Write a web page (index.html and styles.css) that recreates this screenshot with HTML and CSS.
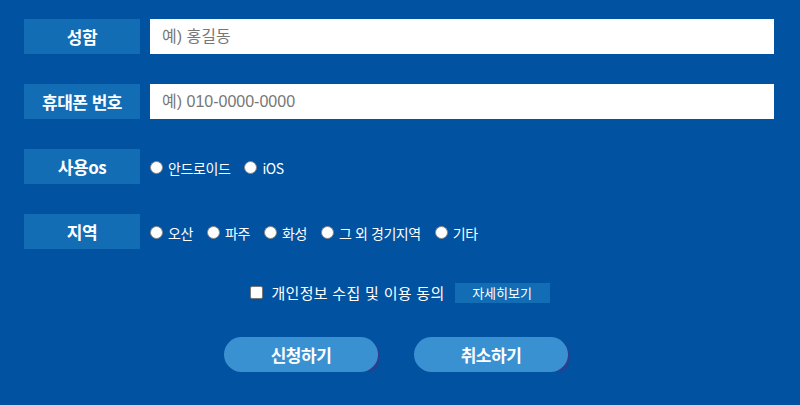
FILE: index.html
```html
<!DOCTYPE html>
<html lang="ko">
<head>
    <meta charset="UTF-8">
    <meta name="viewport" content="width=device-width, initial-scale=1.0">
    <title>신청하기</title>
    <link rel="stylesheet" href="styles.css">
</head>

<body>
    <form class="apply-form" method="post">
        <div class="form-row">
            <label class="row-title" for="name">성함</label>
            <input type="text" id="name" name="name" placeholder="예) 홍길동">
        </div>
        <div class="form-row">
            <label class="row-title" for="phone">휴대폰 번호</label>
            <input type="tel" id="phone" name="phone" placeholder="예) 010-0000-0000">
        </div>
        <div class="form-row">
            <span class="row-title os-title">사용os</span>
            <div class="choices">
                <label><input type="radio" name="os" value="android"> 안드로이드</label>
                <label><input type="radio" name="os" value="ios"> iOS</label>
            </div>
        </div>
        <div class="form-row">
            <span class="row-title">지역</span>
            <div class="choices">
                <label><input type="radio" name="area" value="osan"> 오산</label>
                <label><input type="radio" name="area" value="paju"> 파주</label>
                <label><input type="radio" name="area" value="hwaseong"> 화성</label>
                <label><input type="radio" name="area" value="etc-gg"> 그 외 경기지역</label>
                <label><input type="radio" name="area" value="etc"> 기타</label>
            </div>
        </div>

        <div class="agree-row">
            <label><input type="checkbox" name="agree"> 개인정보 수집 및 이용 동의</label>
            <button type="button" class="detail-btn">자세히보기</button>
        </div>

        <div class="button-row">
            <button type="submit" class="round-btn">신청하기</button>
            <button type="reset" class="round-btn">취소하기</button>
        </div>
    </form>
</body>
</html>
```

FILE: styles.css
```css
body {
    margin: 0;
    background-color: #0152a0;
    font-family: 'Noto Sans CJK KR', 'Noto Sans', sans-serif;
    color: #fff;
}

.apply-form {
    padding: 19px 26px 0 24px;
}

.form-row {
    display: flex;
    align-items: center;
    gap: 10px;
    height: 35px;
    margin-bottom: 30px;
}

.row-title {
    display: flex;
    align-items: center;
    justify-content: center;
    flex: 0 0 116px;
    height: 35px;
    background-color: #126db5;
    font-size: 17px;
    font-weight: bold;
    letter-spacing: -0.5px;
}

.form-row input[type="text"],
.form-row input[type="tel"] {
    flex: 1;
    height: 35px;
    box-sizing: border-box;
    padding: 0 12px;
    border: none;
    font-family: 'Liberation Sans', 'Noto Sans CJK KR', sans-serif;
    font-size: 16px;
    color: #333;
}

.form-row input::placeholder {
    color: #777;
}

.choices {
    display: flex;
    align-items: center;
    gap: 14px;
    padding-top: 2px;
}

.choices label,
.agree-row label {
    display: flex;
    align-items: center;
    gap: 5px;
    font-size: 14px;
    letter-spacing: -0.4px;
}

.choices input[type="radio"] {
    width: 13px;
    height: 13px;
    margin: 0;
    appearance: none;
    background: #fff;
    border: 1px solid #888;
    border-radius: 50%;
    box-sizing: border-box;
}

.agree-row {
    display: flex;
    justify-content: center;
    align-items: center;
    gap: 10px;
    padding-top: 3px;
    padding-left: 2px;
}

.agree-row label {
    gap: 8px;
    font-size: 15px;
    letter-spacing: 0.3px;
}

.agree-row input[type="checkbox"] {
    width: 13px;
    height: 13px;
    margin: 0;
    appearance: none;
    background: #fff;
    border: 1px solid #777;
    border-radius: 2px;
}

.detail-btn {
    width: 95px;
    height: 20px;
    padding: 0;
    border: none;
    background-color: #126db5;
    color: #fff;
    font-family: inherit;
    font-size: 13px;
}

.button-row {
    display: flex;
    justify-content: center;
    gap: 36px;
    margin-top: 34px;
    padding-right: 6px;
}

.round-btn {
    width: 154px;
    height: 35px;
    border: none;
    border-radius: 18px;
    background-color: #3a91d1;
    box-shadow: 2px 2px 0 #2b3f8e;
    color: #fff;
    font-family: inherit;
    font-size: 17px;
    font-weight: bold;
    letter-spacing: -0.5px;
    cursor: pointer;
}
```
